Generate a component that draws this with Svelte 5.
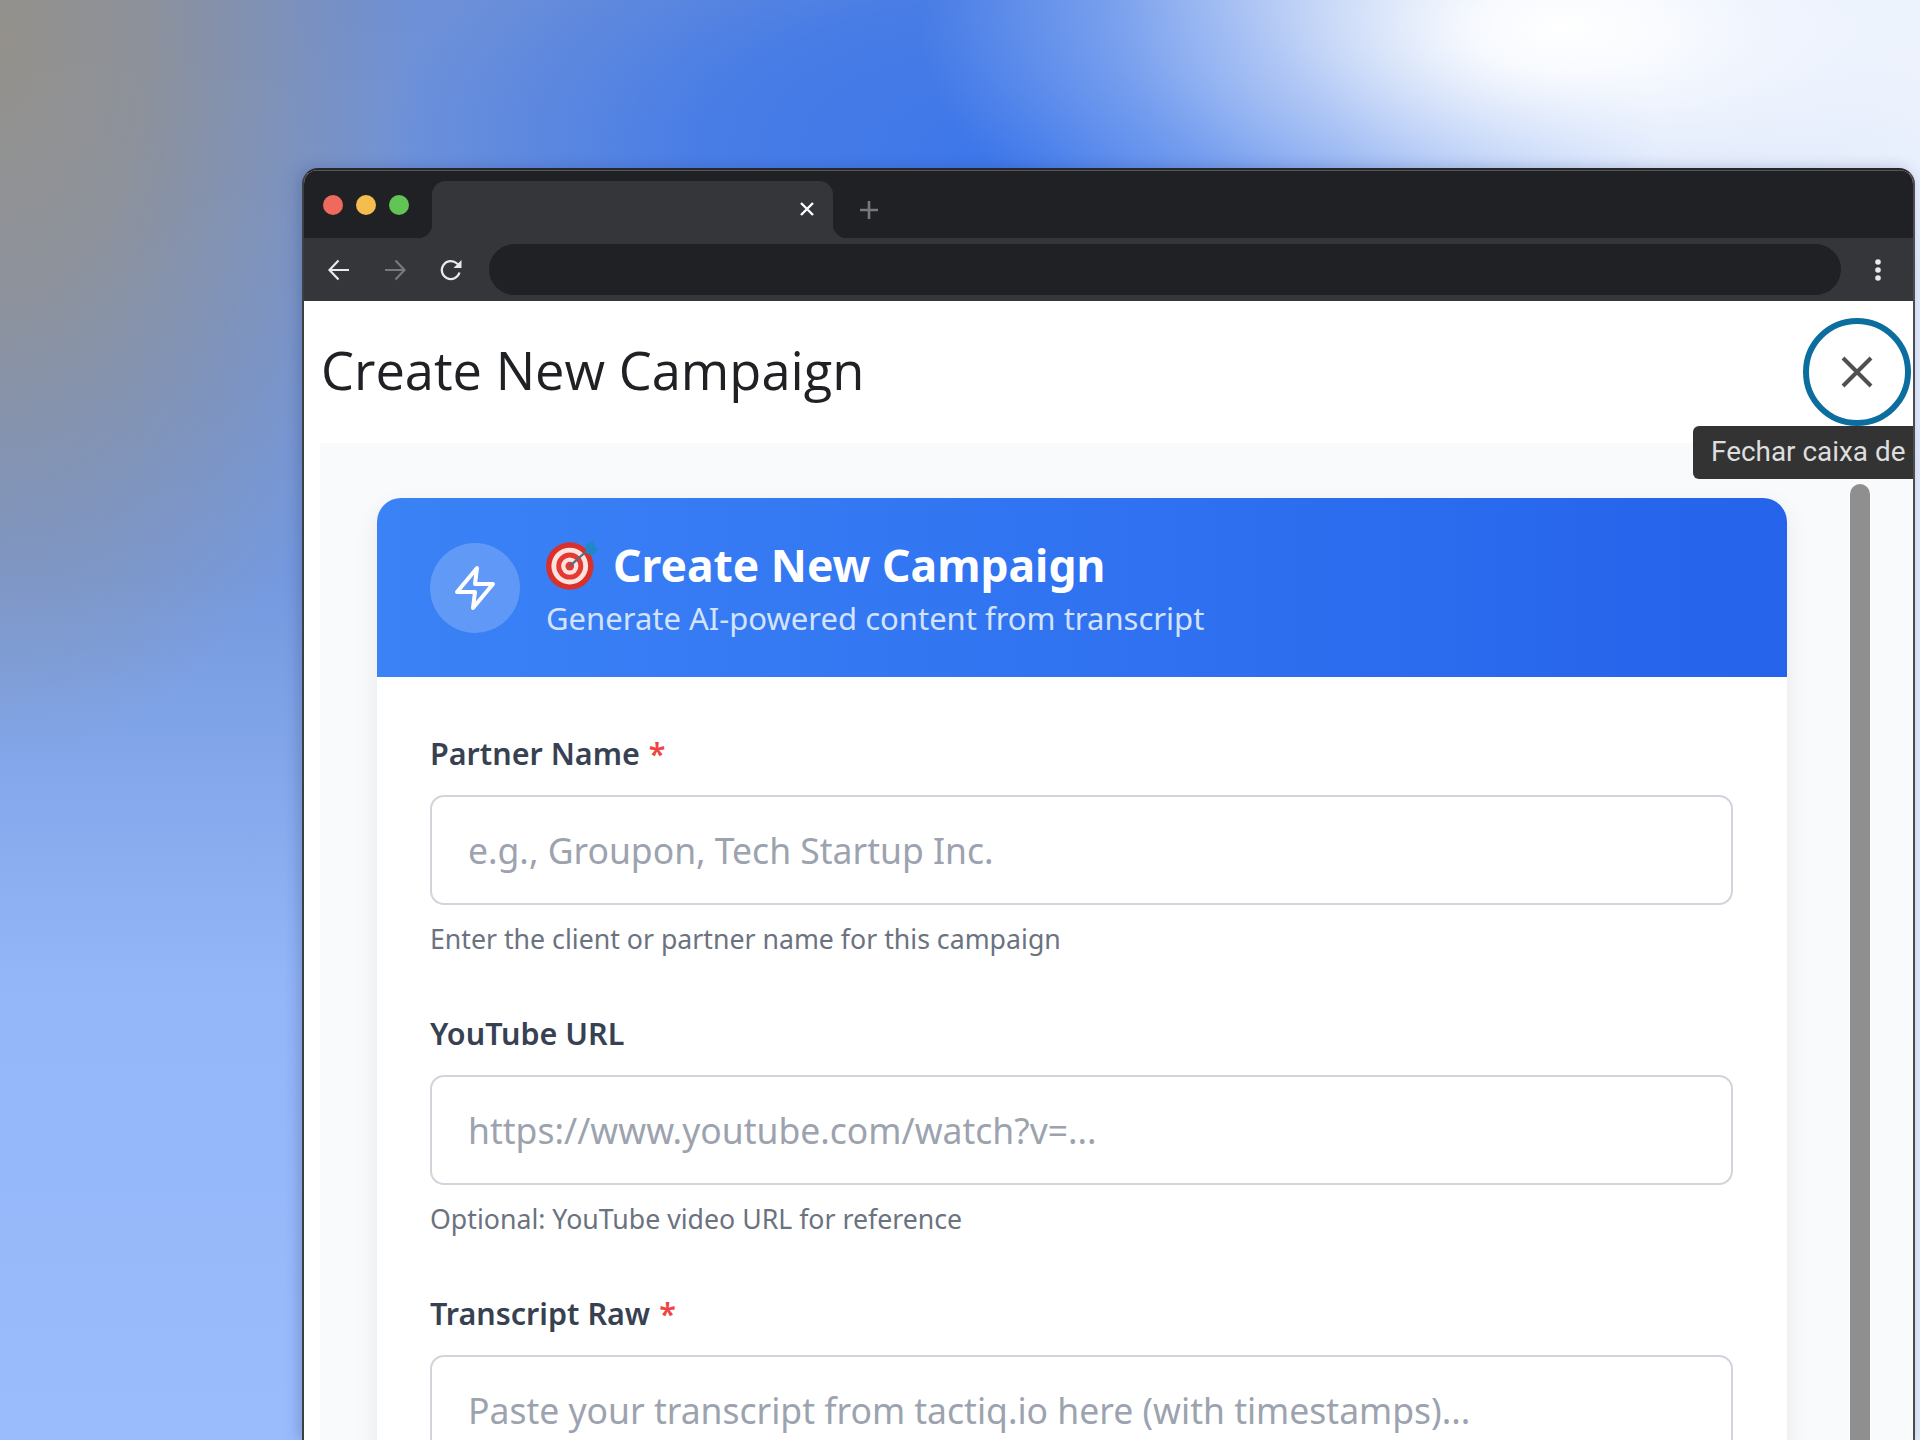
<script>
  const fields = [
    { label: 'Partner Name', required: true, placeholder: 'e.g., Groupon, Tech Startup Inc.', hint: 'Enter the client or partner name for this campaign' },
    { label: 'YouTube URL', required: false, placeholder: 'https://www.youtube.com/watch?v=...', hint: 'Optional: YouTube video URL for reference' },
    { label: 'Transcript Raw', required: true, placeholder: 'Paste your transcript from tactiq.io here (with timestamps)...', hint: '' }
  ];
</script>

<div class="page">
  <div class="window">
    <div class="tabstrip">
      <div class="lights">
        <span class="light red"></span>
        <span class="light yellow"></span>
        <span class="light green"></span>
      </div>
      <div class="tab">
        <svg class="tab-close" viewBox="0 0 16 16" width="16" height="16">
          <path d="M2 2 14 14M14 2 2 14" stroke="#fff" stroke-width="2.4" fill="none" />
        </svg>
      </div>
      <svg class="new-tab" viewBox="0 0 20 20" width="20" height="20">
        <path d="M10 1V19M1 10H19" stroke="#77797d" stroke-width="2.6" fill="none" />
      </svg>
    </div>

    <div class="toolbar">
      <div class="nav">
        <svg viewBox="0 0 24 24" width="24" height="24" fill="none" stroke="#e8eaed" stroke-width="2.2">
          <path d="M22 12H2.5M11.5 2.5 2.5 12l9 9.5" />
        </svg>
        <svg viewBox="0 0 24 24" width="24" height="24" fill="none" stroke="#77797d" stroke-width="2.2">
          <path d="M2 12H21.5M12.5 2.5l9 9.5-9 9.5" />
        </svg>
        <svg viewBox="0 0 24 24" width="24" height="24" fill="none" stroke="#e8eaed" stroke-width="2.2">
          <path d="M20.5 14.5A9 9 0 1 1 18 5.5L21 8" />
          <path d="M22.5 2v8h-8z" fill="#e8eaed" stroke="none" />
        </svg>
      </div>
      <div class="urlbar"></div>
      <svg class="kebab" viewBox="0 0 6 24" width="6" height="24" fill="#e8eaed">
        <circle cx="3" cy="4" r="2.8" />
        <circle cx="3" cy="12" r="2.8" />
        <circle cx="3" cy="20" r="2.8" />
      </svg>
    </div>

    <div class="dialog">
      <header class="dialog-head">
        <h1>Create New Campaign</h1>
        <button class="close" aria-label="Fechar caixa de diálogo">
          <svg viewBox="0 0 32 32" width="32" height="32">
            <path d="M2 2 30 30M30 2 2 30" stroke="#505050" stroke-width="4" fill="none" />
          </svg>
        </button>
        <div class="tooltip">Fechar caixa de diálogo</div>
      </header>

      <div class="panel">
        <section class="card">
          <div class="card-head">
            <div class="bolt">
              <svg viewBox="0 0 24 24" width="48" height="48" fill="none" stroke="#fff" stroke-width="2" stroke-linejoin="round" stroke-linecap="round">
                <path d="M13 2 3 14h9l-1 8 10-12h-9z" />
              </svg>
            </div>
            <div class="card-titles">
              <h2>
                <svg class="target" viewBox="0 0 50 48" width="54" height="52" aria-hidden="true">
                  <circle cx="22" cy="25" r="22" fill="#d9302c" />
                  <circle cx="22" cy="25" r="17" fill="#fbe4e0" />
                  <circle cx="22" cy="25" r="12.5" fill="#e53935" />
                  <circle cx="22" cy="25" r="8" fill="#fbe4e0" />
                  <circle cx="22" cy="25" r="4" fill="#e53935" />
                  <path d="M22 25 40 9" stroke="#5a6b7a" stroke-width="2" />
                  <path d="M37 5l7-4 1 6 4 2-6 6-6-2z" fill="#1e88c9" />
                </svg>
                Create New Campaign
              </h2>
              <p>Generate AI-powered content from transcript</p>
            </div>
          </div>

          <div class="card-body">
            {#each fields as field}
              <div class="field">
                <div class="label">{field.label}{#if field.required}<span class="req">*</span>{/if}</div>
                <input type="text" placeholder={field.placeholder} />
                {#if field.hint}
                  <div class="hint">{field.hint}</div>
                {/if}
              </div>
            {/each}
          </div>
        </section>
        <div class="scrollbar"></div>
      </div>
    </div>
  </div>
</div>

<style>
  :global(body) {
    margin: 0;
  }

  .page {
    width: 1920px;
    height: 1440px;
    box-sizing: border-box;
    padding: 168px 5px 0 302px;
    overflow: hidden;
    background:
      radial-gradient(ellipse 640px 300px at 1560px 30px, #ffffff 0%, rgba(255, 255, 255, 0.92) 14%, rgba(255, 255, 255, 0.62) 38%, rgba(255, 255, 255, 0.25) 70%, rgba(255, 255, 255, 0) 100%),
      radial-gradient(ellipse 420px 720px at 0px 40px, #94918b 0%, rgba(148, 145, 139, 0.8) 35%, rgba(148, 145, 139, 0) 100%),
      radial-gradient(ellipse 640px 300px at 1020px 150px, #3c76ea 0%, rgba(60, 118, 234, 0.75) 50%, rgba(60, 118, 234, 0) 100%),
      linear-gradient(90deg, rgba(255, 255, 255, 0) 50%, rgba(190, 212, 252, 0.9) 80%, rgba(225, 234, 252, 1) 100%),
      linear-gradient(180deg, #6d90d8 0%, #7599de 40%, #93b6f8 68%, #9abcfd 100%);
  }

  .window {
    height: 1272px;
    box-sizing: border-box;
    display: flex;
    flex-direction: column;
    background: #fff;
    border: 2px solid #26282b;
    border-color: #26282b #4a4c50 #26282b #3c4043;
    border-bottom: 0;
    border-radius: 16px 16px 0 0;
    overflow: hidden;
    box-shadow: -4px 0 14px rgba(40, 60, 110, 0.25);
  }

  .tabstrip {
    height: 68px;
    flex: none;
    display: flex;
    align-items: flex-end;
    background: #202124;
    box-shadow: inset 0 1px 0 #55575b;
  }

  .lights {
    display: flex;
    gap: 13px;
    align-self: flex-start;
    margin: 25px 0 0 19px;
  }

  .light {
    width: 20px;
    height: 20px;
    border-radius: 50%;
  }

  .red { background: #ee6a5f; }
  .yellow { background: #f5bd4f; }
  .green { background: #61c454; }

  .tab {
    position: relative;
    width: 401px;
    height: 57px;
    margin-left: 23px;
    box-sizing: border-box;
    padding: 20px 18px 0 0;
    display: flex;
    justify-content: flex-end;
    align-items: flex-start;
    background: #35363a;
    border-radius: 14px 14px 0 0;
  }

  /* inverted corners where the tab meets the toolbar */
  .tab::before,
  .tab::after {
    content: '';
    position: absolute;
    bottom: 0;
    width: 14px;
    height: 14px;
  }

  .tab::before {
    left: -14px;
    background: radial-gradient(circle at 0 0, transparent 14px, #35363a 14.5px);
  }

  .tab::after {
    right: -14px;
    background: radial-gradient(circle at 100% 0, transparent 14px, #35363a 14.5px);
  }

  .new-tab {
    margin: 0 0 18px 26px;
  }

  .toolbar {
    height: 63px;
    flex: none;
    display: flex;
    align-items: center;
    padding: 0 0 0 23px;
    background: #35363a;
  }

  .nav {
    display: flex;
    gap: 32px;
    width: 162px;
  }

  .urlbar {
    width: 1352px;
    height: 51px;
    border-radius: 26px;
    background: #202124;
  }

  .kebab {
    margin-left: 34px;
  }

  .dialog {
    flex: 1;
    min-height: 0;
    display: flex;
    flex-direction: column;
    padding-left: 16px;
  }

  .dialog-head {
    position: relative;
    height: 142px;
    flex: none;
    display: flex;
    align-items: center;
    justify-content: space-between;
  }

  h1 {
    margin: 0 0 0 1px;
    padding-bottom: 5px;
    font: 400 52.4px "Open Sans", sans-serif;
    color: #202124;
  }

  .close {
    width: 108px;
    height: 108px;
    margin-right: 2px;
    padding: 0;
    display: flex;
    align-items: center;
    justify-content: center;
    background: none;
    border: 6px solid #0b6e9e;
    border-radius: 50%;
  }

  .tooltip {
    position: absolute;
    top: 125px;
    right: 0;
    z-index: 2;
    width: 220px;
    height: 53px;
    box-sizing: border-box;
    padding: 0 0 0 18px;
    overflow: hidden;
    white-space: nowrap;
    font: 400 27.9px/52px Roboto, sans-serif;
    color: #dedede;
    background: #333;
    border-radius: 6px 0 0 6px;
  }

  .panel {
    flex: 1;
    min-height: 0;
    display: flex;
    align-items: flex-start;
    padding: 55px 0 0 57px;
    background: #f9fafb;
    overflow: hidden;
  }

  .card {
    width: 1410px;
    flex: none;
    background: #fff;
    border-radius: 24px 24px 0 0;
    box-shadow: 0 8px 24px rgba(0, 0, 0, 0.08);
    font-family: "Noto Sans", sans-serif;
  }

  .card-head {
    height: 179px;
    box-sizing: border-box;
    display: flex;
    align-items: center;
    gap: 26px;
    padding-left: 53px;
    background: linear-gradient(90deg, #3b82f6, #2563eb);
    border-radius: 24px 24px 0 0;
  }

  .bolt {
    width: 90px;
    height: 90px;
    display: flex;
    align-items: center;
    justify-content: center;
    border-radius: 50%;
    background: rgba(255, 255, 255, 0.2);
  }

  .card-titles h2 {
    margin: 0;
    display: flex;
    align-items: center;
    gap: 13px;
    font-size: 44.4px;
    font-weight: 700;
    line-height: 60px;
    color: #fff;
  }

  .card-titles p {
    margin: 0;
    font-size: 31px;
    line-height: 46px;
    color: #d3e3fd;
  }

  .card-body {
    padding: 56px 54px 0 53px;
  }

  .field {
    margin-bottom: 56px;
  }

  .label {
    font-size: 30.5px;
    font-weight: 600;
    line-height: 40px;
    color: #374151;
  }

  .req {
    margin-left: 9px;
    color: #ef4444;
  }

  input {
    display: block;
    width: 100%;
    height: 110px;
    margin-top: 22px;
    box-sizing: border-box;
    padding: 0 36px;
    font: 400 35.5px "Noto Sans", sans-serif;
    background: #fff;
    border: 2px solid #d1d5db;
    border-radius: 14px;
  }

  input::placeholder {
    color: #9ca3af;
    opacity: 1;
  }

  .hint {
    margin-top: 16px;
    font-size: 26.7px;
    line-height: 36px;
    color: #6b7280;
  }

  .scrollbar {
    width: 20px;
    height: 1000px;
    margin: -14px 0 0 63px;
    flex: none;
    border-radius: 10px;
    background: #8f8f8f;
  }
</style>
